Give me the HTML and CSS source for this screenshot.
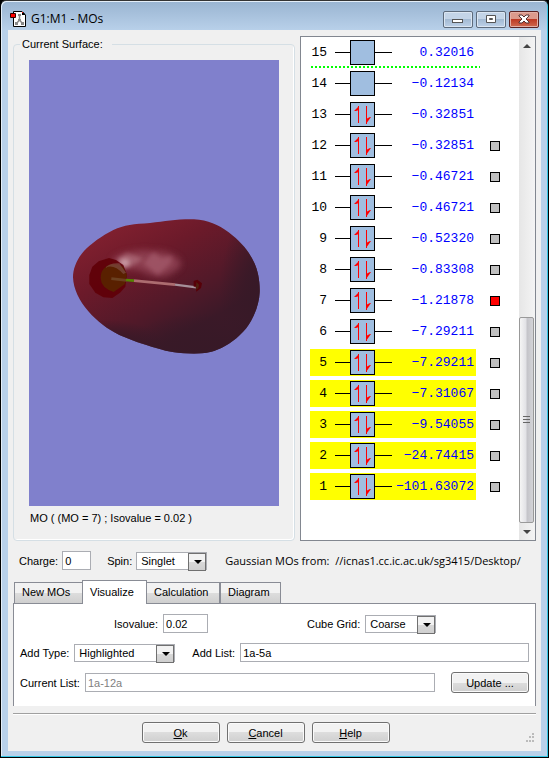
FILE: index.html
```html
<!DOCTYPE html>
<html lang="en">
<head>
    <meta charset="UTF-8">
    <meta name="viewport" content="width=device-width, initial-scale=1.0">
    <title>G1:M1 - MOs</title>
    <link rel="stylesheet" href="styles.css">
</head>
<body>
    <div class="window">
        <!-- Title bar -->
        <div class="titlebar">
            <svg class="app-icon" width="16" height="16" viewBox="0 0 16 16">
                <path d="M3.500 .5h8.500l3.500 3.500v11.500h-12z" fill="#fff" stroke="#000"/>
                <path d="M12 1h1l2 2v1h-3z" fill="#000"/>
                <path d="M12 1h1v1h-1z" fill="#f00"/>
                <path d="M9.500 4v5M9.500 9l-3 3.500M9.500 9l3 3.500" fill="none" stroke="#888" stroke-width="1.500"/>
                <path d="M8 3h3v2h-3zM8 8h3v2h-3zM5 11h3v3h-3zM11 11h3v3h-3z" fill="#888"/>
                <path d="M.5 2.500h5v4h-5z" fill="#f00" stroke="#300"/>
            </svg>
            <span class="title">G1:M1 - MOs</span>
            <div class="window-buttons">
                <button class="win-btn" aria-label="Minimize">
                    <svg width="12" height="10" viewBox="0 0 12 10"><rect x=".5" y="5.500" width="10" height="3" fill="#fff" stroke="#555"/></svg>
                </button>
                <button class="win-btn" aria-label="Maximize">
                    <svg width="12" height="10" viewBox="0 0 12 10"><path d="M1.500 1.500h9v7h-9zM4.500 4.500v1h3v-1z" fill="#fff" fill-rule="evenodd" stroke="#555"/></svg>
                </button>
                <button class="win-btn close" aria-label="Close">
                    <svg width="12" height="10" viewBox="0 0 12 10"><path d="M1 1h3l2 2 2-2h3v1l-3 3 3 3v1h-3l-2-2-2 2h-3v-1l3-3-3-3z" fill="#fff" stroke="#533"/></svg>
                </button>
            </div>
        </div>

        <div class="client">
            <div class="top">
                <!-- Surface view -->
                <fieldset class="surface">
                    <legend>Current Surface:</legend>
                    <svg class="view" viewBox="-93 -420 750 1338">
                        <defs>
                            <linearGradient id="body" x1="0.15" y1="0.1" x2="0.75" y2="0.9">
                                <stop offset="0" stop-color="#82202f"/>
                                <stop offset="0.3" stop-color="#6c1a2a"/>
                                <stop offset="0.62" stop-color="#521929"/>
                                <stop offset="0.85" stop-color="#3b1928"/>
                            </linearGradient>
                            <radialGradient id="shade">
                                <stop offset="0" stop-color="#371927"/>
                                <stop offset="0.4" stop-color="#371927" stop-opacity="0.8"/>
                                <stop offset="1" stop-color="#371927" stop-opacity="0"/>
                            </radialGradient>
                            <filter id="soft" x="-30%" y="-30%" width="160%" height="160%">
                                <feGaussianBlur stdDeviation="11"/>
                            </filter>
                            <filter id="spot" x="-50%" y="-50%" width="200%" height="200%">
                                <feGaussianBlur stdDeviation="6"/>
                            </filter>
                            <clipPath id="blob">
                                <path d="M39 232C39 206 50 178 72 153C92 132 127 106 160 90C192 75 222 72 270 69C318 64 350 57 402 58C445 60 474 74 506 97C544 126 567 155 582 187C594 211 600 245 599 276C598 304 589 334 573 363C556 394 527 420 495 438C466 455 437 461 402 461C355 461 327 456 291 445C246 432 213 420 178 405C141 387 111 364 85 334C58 303 40 266 39 232Z"/>
                            </clipPath>
                        </defs>
                        <g clip-path="url(#blob)">
                            <rect x="30" y="50" width="580" height="420" fill="url(#body)"/>
                            <ellipse cx="610" cy="270" rx="130" ry="260" fill="url(#shade)"/>
                            <ellipse cx="430" cy="470" rx="260" ry="130" fill="url(#shade)"/>
                            <ellipse cx="140" cy="430" rx="170" ry="70" fill="url(#shade)"/>
                            <path d="M155 180C190 147 270 148 325 158C370 178 375 198 340 215C310 242 270 228 240 210C210 204 190 212 165 195Z" fill="#994c5d" opacity="0.75" filter="url(#soft)"/>
                            <path d="M250 190l30-33 24 17 34 -6 -8 25 -37 32z" fill="#ac6474" opacity="0.55" filter="url(#spot)"/>
                            <path d="M170 178l30-18 50 16-40 24-24 4z" fill="#b57884" opacity="0.6" filter="url(#spot)"/>
                            <ellipse cx="194" cy="188" rx="15" ry="12" fill="#d0a5ae" opacity="0.8" filter="url(#spot)"/>
                        </g>
                        <path d="M147 174L168 180 190 195 201 224 196 260 180 278 157 294 130 292 106 278 88 252 88 225 97 200 116 184Z" fill="#600007" opacity="0.93"/>
                        <path d="M136 202Q154 184 190 201L201 225 194 253 161 276Q123 264 122 235 122 212 136 202Z" fill="#592000"/>
                        <path d="M135 204Q148 188 178 190L198 218 190 222Q160 190 135 204Z" fill="#7d4b42" opacity="0.7"/>
                        <path d="M154 236L200 241" stroke="#6b4020" stroke-width="8"/>
                        <path d="M198 240L222 242" stroke="#548400" stroke-width="8"/>
                        <path d="M222 242L345 254" stroke="#ac6c70" stroke-width="8"/>
                        <path d="M345 254L409 262" stroke="#a6909a" stroke-width="7"/>
                        <path d="M401 243L412 239 426 250 423 264 409 275 407 260 401 260Z" fill="#570008"/>
                        <path d="M409 246l8 8-2 11-7 4z" fill="#512010"/>
                    </svg>
                    <p class="caption">MO ( (MO = 7) ; Isovalue = 0.02 )</p>
                </fieldset>

                <!-- Orbital energies -->
                <div class="orbitals">
                    <div id="levels" class="levels"></div>
                    <div class="scrollbar">
                        <button class="scroll-btn" aria-label="Scroll up">
                            <svg width="8" height="4" viewBox="0 0 8 4"><path d="M4 0l4 4h-8z" fill="#444"/></svg>
                        </button>
                        <div class="track"></div>
                        <div class="thumb">
                            <svg width="7" height="8" viewBox="0 0 7 8"><path d="M0 .5h7M0 3.500h7M0 6.500h7" stroke="#666"/></svg>
                        </div>
                        <button class="scroll-btn" aria-label="Scroll down">
                            <svg width="8" height="4" viewBox="0 0 8 4"><path d="M0 0h8l-4 4z" fill="#444"/></svg>
                        </button>
                    </div>
                </div>
            </div>

            <div class="row system">
                <label for="charge">Charge:</label>
                <input type="text" id="charge" class="text charge" value="0">
                <label for="spin">Spin:</label>
                <span class="select spin"><select id="spin"><option>Singlet</option><option>Triplet</option></select></span>
                <span class="source">Gaussian MOs from:&nbsp; //icnas1.cc.ic.ac.uk/sg3415/Desktop/</span>
            </div>

            <div class="tabs">
                <button class="tab new">New MOs</button>
                <button class="tab active">Visualize</button>
                <button class="tab calculation">Calculation</button>
                <button class="tab diagram">Diagram</button>
            </div>

            <div class="panel">
                <div class="row iso-row">
                    <label for="isovalue">Isovalue:</label>
                    <input type="text" id="isovalue" class="text isovalue" value="0.02">
                    <label for="grid" class="grid-label">Cube Grid:</label>
                    <span class="select"><select id="grid"><option>Coarse</option><option>Medium</option><option>Fine</option></select></span>
                </div>
                <div class="row">
                    <label for="addType">Add Type:</label>
                    <span class="select add-type"><select id="addType"><option>Highlighted</option><option>All</option></select></span>
                    <label for="addList" class="list-label">Add List:</label>
                    <input type="text" id="addList" class="text fill" value="1a-5a">
                </div>
                <div class="row">
                    <label for="currentList">Current List:</label>
                    <input type="text" id="currentList" class="text fill" value="1a-12a" disabled>
                    <button class="btn update">Update ...</button>
                </div>
            </div>

            <div class="footer">
                <button class="btn"><u>O</u>k</button>
                <button class="btn"><u>C</u>ancel</button>
                <button class="btn"><u>H</u>elp</button>
                <svg class="grip" width="10" height="10" viewBox="0 0 10 10">
                    <path d="M7 0h2v2h-2zM4 3h2v2h-2zM7 3h2v2h-2zM1 7h2v2h-2zM4 7h2v2h-2zM7 7h2v2h-2z" fill="#bbb"/>
                </svg>
            </div>
        </div>
    </div>

    <script>
        // Orbitals, highest energy first
        const orbitals = [
            { n: 15, energy: '0.32016' },
            { n: 14, energy: '-0.12134' },
            { n: 13, energy: '-0.32851', occupied: true },
            { n: 12, energy: '-0.32851', occupied: true, surface: true },
            { n: 11, energy: '-0.46721', occupied: true, surface: true },
            { n: 10, energy: '-0.46721', occupied: true, surface: true },
            { n: 9, energy: '-0.52320', occupied: true, surface: true },
            { n: 8, energy: '-0.83308', occupied: true, surface: true },
            { n: 7, energy: '-1.21878', occupied: true, surface: true, shown: true },
            { n: 6, energy: '-7.29211', occupied: true, surface: true },
            { n: 5, energy: '-7.29211', occupied: true, surface: true, selected: true },
            { n: 4, energy: '-7.31067', occupied: true, surface: true, selected: true },
            { n: 3, energy: '-9.54055', occupied: true, surface: true, selected: true },
            { n: 2, energy: '-24.74415', occupied: true, surface: true, selected: true },
            { n: 1, energy: '-101.63072', occupied: true, surface: true, selected: true }
        ];

        const arrows = `
            <path d="M23.500 4v17M31.500 4v18" stroke="#f00"/>
            <path d="M24 4l-5 5h2l3-1zM31 22l5-7h-1l-4 2z" fill="#f00"/>`;

        let html = '';
        orbitals.forEach(o => {
            html += `
                <div class="orbital">
                    <div class="level ${o.selected ? 'selected' : ''}">
                        <span class="number">${o.n}</span>
                        <svg width="57" height="25" viewBox="0 0 57 25">
                            <path d="M0 12.500h57" stroke="#000"/>
                            <rect x="15.500" y=".5" width="24" height="24" fill="#a0bee0" stroke="#000"/>
                            ${o.occupied ? arrows : ''}
                        </svg>
                        <span class="energy">${o.energy.replace('-', '\u2212')}</span>
                    </div>
                    ${o.surface ? `<input type="checkbox" class="marker" aria-label="Surface ${o.n}" ${o.shown ? 'checked' : ''}>` : ''}
                </div>`;
            if (o.n === 15) {
                html += '<div class="divider"></div>';
            }
        });
        document.getElementById('levels').innerHTML = html;
    </script>
</body>
</html>
```

FILE: styles.css
```css
* {
    box-sizing: border-box;
}
body {
    margin: 0;
    background-color: #000;
    font-family: "Liberation Sans", Arial, sans-serif;
    font-size: 11px;
    line-height: 16px;
    color: #000;
}
button, input, select {
    font: inherit;
    color: inherit;
    margin: 0;
}
svg {
    display: block;
}
.window {
    display: flex;
    flex-direction: column;
    min-height: 100vh;
    padding: 1px 7px 6px;
    border: 1px solid #000;
    border-top-color: #333;
    border-radius: 6px 6px 0 0;
    background: linear-gradient(#99b4d1, #b9d1ea 30px);
    box-shadow: inset -1px -1px 0 #34c6e4, inset 1px 1px 0 #e4eef8;
}
.titlebar {
    display: flex;
    align-items: center;
    height: 28px;
    padding: 6px 2px 0 2px;
}
.title {
    flex: 1;
    padding-left: 5px;
    font-family: "Open Sans", "Noto Sans", sans-serif;
    font-size: 12px;
}
.window-buttons {
    display: flex;
    gap: 3px;
}
.win-btn {
    display: flex;
    align-items: center;
    justify-content: center;
    width: 30px;
    height: 17px;
    padding: 0;
    border: 1px solid #5d6b7c;
    border-radius: 2px;
    background: linear-gradient(#c3d4e7 45%, #a3bad3 50%, #bdd1e8);
    box-shadow: inset 0 0 0 1px #dbe6f2;
}
.win-btn.close {
    border-color: #5a2222;
    background: linear-gradient(#dc9a8c 45%, #bd3a24 50%, #cf6a50);
    box-shadow: inset 0 0 0 1px #e3b0a6;
}
.client {
    flex: 1;
    padding: 6px 5px;
    background-color: #f0f0f0;
}
.top {
    display: grid;
    grid-template-columns: minmax(0, 1fr) 236px;
    gap: 5px;
}
.surface {
    min-width: 0;
    margin: 0;
    padding: 8px 15px 14px;
    border: 1px solid #d5dfe5;
    border-radius: 4px;
    box-shadow: inset -1px -1px 0 #fff;
}
.surface legend {
    margin-left: -9px;
    padding: 0 9px 0 2px;
}
.view {
    width: 100%;
    height: auto;
    background-color: #8080cc;
}
.caption {
    margin: 4px 0 0 1px;
}
.orbitals {
    display: flex;
    justify-content: space-between;
    border: 1px solid #828790;
    background-color: #fff;
}
.levels {
    padding: 2px 0 0 9px;
    font-family: "Liberation Mono", "Courier New", monospace;
    font-size: 13px;
}
.orbital {
    display: flex;
    align-items: center;
    gap: 14px;
    margin-bottom: 4px;
}
.level {
    display: flex;
    align-items: center;
    width: 166px;
    height: 27px;
    padding-right: 2px;
}
.level.selected {
    background-color: #ff0;
}
.number {
    width: 17px;
    margin-right: 8px;
    text-align: right;
}
.energy {
    flex: 1;
    color: #00f;
    text-align: right;
}
.divider {
    width: 169px;
    height: 2px;
    margin: -4px 0 2px 1px;
    background: repeating-linear-gradient(90deg, #0f0 0 2px, transparent 2px 4px);
}
.marker {
    appearance: none;
    width: 10px;
    height: 10px;
    border: 1px solid #000;
    background-color: #c0c0c0;
}
.marker:checked {
    background-color: #f00;
}
.scrollbar {
    display: flex;
    flex-direction: column;
    width: 16px;
    background: linear-gradient(90deg, #e6e6e6, #f4f4f4);
}
.scroll-btn {
    display: flex;
    align-items: center;
    justify-content: center;
    height: 17px;
    padding: 0;
    border: 0;
    background: none;
}
.track {
    flex: 264;
}
.thumb {
    display: flex;
    flex: 204;
    align-items: center;
    justify-content: center;
    margin-right: 1px;
    border: 1px solid #999;
    border-radius: 2px;
    background: linear-gradient(90deg, #f5f5f5, #e2e2e6 45%, #c4c4c9 55%, #d4d4d8);
}
.row {
    display: flex;
    align-items: center;
    gap: 5px;
}
.system {
    gap: 4px;
    margin: 10px 6px;
}
.text {
    height: 19px;
    min-width: 0;
    padding: 0 2px;
    border: 1px solid #abadb3;
    border-radius: 0;
    background-color: #fff;
}
.text:disabled {
    color: #808080;
}
.charge {
    width: 29px;
    margin-right: 12px;
}
.select {
    position: relative;
    width: 71px;
    height: 18px;
    border: 1px solid #abadb3;
    background-color: #fff;
}
.select select {
    appearance: none;
    display: block;
    width: 100%;
    height: 16px;
    padding: 0 16px 0 4px;
    border: 0;
    background: none;
    line-height: 14px;
}
/* drop-down arrow button */
.select::before {
    content: "";
    position: absolute;
    top: 0;
    right: 0;
    width: 16px;
    height: 16px;
    border: 1px solid #707070;
    background: linear-gradient(#f2f2f2 50%, #d8d8d8 50%, #cfcfcf);
    pointer-events: none;
}
.select::after {
    content: "";
    position: absolute;
    top: 7px;
    right: 4px;
    border: 4px solid transparent;
    border-top-color: #000;
    border-bottom: 0;
    pointer-events: none;
}
.source {
    flex: 1;
    min-width: 0;
    margin-left: 14px;
    overflow: hidden;
    white-space: nowrap;
    font-family: "Open Sans", "Noto Sans", sans-serif;
}
.tabs {
    display: flex;
    align-items: flex-end;
    padding-left: 1px;
}
.tab {
    height: 21px;
    padding: 0 7px 2px;
    border: 1px solid #898c95;
    border-bottom: 0;
    background: linear-gradient(#f2f2f2 50%, #dddddd 50%, #cfcfcf);
    text-align: left;
}
.tab.new {
    width: 68px;
    border-right: 0;
}
.tab.active {
    width: 65px;
    height: 24px;
    margin-bottom: -1px;
    background: #fff;
    z-index: 1;
}
.tab.calculation {
    width: 73px;
    border-left: 0;
}
.tab.diagram {
    width: 61px;
}
.panel {
    display: flex;
    flex-direction: column;
    gap: 10px;
    padding: 10px 6px 13px;
    border: 1px solid #898c95;
    border-bottom: 0;
    background-color: #fff;
}
.iso-row {
    padding-left: 94px;
}
.isovalue {
    width: 45px;
}
.grid-label {
    margin-left: 94px;
}
.add-type {
    width: 101px;
}
.list-label {
    margin-left: 12px;
}
.fill {
    flex: 1;
}
.btn {
    width: 78px;
    height: 21px;
    padding: 0;
    border: 1px solid #707070;
    border-radius: 3px;
    background: linear-gradient(#f2f2f2 50%, #dddddd 50%, #cfcfcf);
    box-shadow: inset 0 0 0 1px #fafafa;
}
.update {
    margin-left: 11px;
}
.footer {
    position: relative;
    display: flex;
    justify-content: center;
    gap: 7px;
    margin-top: 7px;
    padding: 8px 18px 0 0;
    border-top: 1px solid #a0a0a0;
    box-shadow: inset 0 1px 0 #fff;
}
.grip {
    position: absolute;
    right: 1px;
    bottom: 0;
}
```
